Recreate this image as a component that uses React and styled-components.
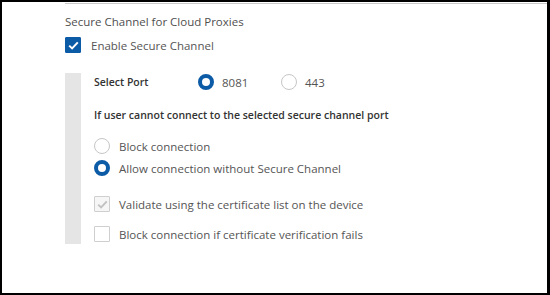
import React from 'react';
import styled, { createGlobalStyle } from 'styled-components';

const GlobalStyle = createGlobalStyle`
  html, body {
    margin: 0;
    padding: 0;
    background: #ffffff;
  }
  body {
    font-family: "Open Sans", "Noto Sans", sans-serif;
    color: #555555;
  }
`;

const Frame = styled.div`
  width: 550px;
  height: 295px;
  box-sizing: border-box;
  border-style: solid;
  border-color: #000000;
  border-width: 2px 3px 2px 2px;
  background: #ffffff;
  overflow: hidden;
`;

const Section = styled.section`
  margin: 1px 0 0 63px;
  border-top: 1px solid #c9c9c9;
  padding-top: 10px;
`;

const Title = styled.h3`
  margin: 0;
  font-size: 11.5px;
  font-weight: 400;
  line-height: 16px;
  color: #4f4f4f;
`;

const Row = styled.label`
  display: flex;
  align-items: center;
  gap: ${p => p.$gap || 9}px;
  height: ${p => p.$h || 22}px;
  font-size: 11.5px;
  color: #555555;
`;

const Check = styled.span`
  width: 16px;
  height: 16px;
  box-sizing: border-box;
  flex: none;
  display: flex;
  align-items: center;
  justify-content: center;
  border: 1px solid ${p => (p.$checked && !p.$disabled ? '#0c5ba6' : '#cfcfcf')};
  background: ${p => (p.$checked && !p.$disabled ? '#0c5ba6' : p.$disabled ? '#f6f6f6' : '#ffffff')};
  border-radius: 1px;
`;

const Radio = styled.span`
  width: 16px;
  height: 16px;
  box-sizing: border-box;
  flex: none;
  border-radius: 50%;
  border: ${p => (p.$checked ? '4px solid #0c5ba6' : '1px solid #c6c6c6')};
  background: #ffffff;
`;

const Indent = styled.div`
  display: flex;
  margin-top: 13px;
`;

const Bar = styled.div`
  width: 16px;
  background: #e5e5e5;
  flex: none;
`;

const Body = styled.div`
  padding: 0 0 0 13px;
  display: flex;
  flex-direction: column;
`;

const PortRow = styled.div`
  display: flex;
  align-items: center;
  height: 18px;
`;

const Label = styled.span`
  font-size: 10.5px;
  font-weight: 600;
  color: #333333;
  width: ${p => (p.$w ? `${p.$w}px` : 'auto')};
  flex: none;
`;

const PortOption = styled(Row)`
  width: ${p => p.$w}px;
  gap: 8px;
`;

const Question = styled(Label)`
  margin-top: 16px;
  line-height: 16px;
  margin-bottom: 12px;
`;

const Options = styled.div`
  display: flex;
  flex-direction: column;
  gap: ${p => p.$gap || 0}px;
  margin-bottom: ${p => p.$mb || 0}px;
`;

function Tick({ color }) {
  return (
    <svg width="11" height="9" viewBox="0 0 11 9">
      <path d="M1.2 4.6 L4.1 7.4 L9.8 1.4" fill="none" stroke={color} strokeWidth="2" />
    </svg>
  );
}

export default function App() {
  return (
    <Frame>
      <GlobalStyle />
      <Section>
        <Title>Secure Channel for Cloud Proxies</Title>
        <Row $h={30} $gap={10}>
          <Check $checked><Tick color="#ffffff" /></Check>
          Enable Secure Channel
        </Row>
        <Indent>
          <Bar />
          <Body>
            <PortRow>
              <Label $w={104}>Select Port</Label>
              <PortOption $w={83} $h={18}>
                <Radio $checked />
                8081
              </PortOption>
              <PortOption $w={60} $h={18}>
                <Radio />
                443
              </PortOption>
            </PortRow>
            <Question>If user cannot connect to the selected secure channel port</Question>
            <Options $mb={15}>
              <Row>
                <Radio />
                Block connection
              </Row>
              <Row>
                <Radio $checked />
                Allow connection without Secure Channel
              </Row>
            </Options>
            <Options $gap={10}>
              <Row $h={20}>
                <Check $checked $disabled><Tick color="#c2c2c2" /></Check>
                Validate using the certificate list on the device
              </Row>
              <Row $h={20}>
                <Check />
                Block connection if certificate verification fails
              </Row>
            </Options>
          </Body>
        </Indent>
      </Section>
    </Frame>
  );
}
